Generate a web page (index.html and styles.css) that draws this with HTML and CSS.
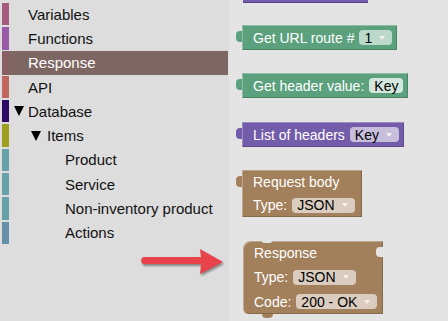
FILE: index.html
```html
<!DOCTYPE html>
<html lang="en">
  <head>
    <meta charset="UTF-8" />
    <meta name="viewport" content="width=device-width, initial-scale=1.0" />
    <title>Blocks</title>
    <link rel="stylesheet" href="styles.css">
  </head>
  <body>
    <div class="app">
      <nav class="toolbox">
        <div class="cat"><span class="swatch sw-variables"></span><span class="name">Variables</span></div>
        <div class="cat"><span class="swatch sw-functions"></span><span class="name">Functions</span></div>
        <div class="cat selected"><span class="swatch sw-response"></span><span class="name">Response</span></div>
        <div class="cat"><span class="swatch sw-api"></span><span class="name">API</span></div>
        <div class="cat folder"><span class="swatch sw-database"></span><span class="caret"></span><span class="name">Database</span></div>
        <div class="cat folder lvl1"><span class="swatch sw-items"></span><span class="caret"></span><span class="name">Items</span></div>
        <div class="cat lvl2"><span class="swatch sw-item"></span><span class="name">Product</span></div>
        <div class="cat lvl2"><span class="swatch sw-item"></span><span class="name">Service</span></div>
        <div class="cat lvl2"><span class="swatch sw-item"></span><span class="name">Non-inventory product</span></div>
        <div class="cat lvl2"><span class="swatch sw-actions"></span><span class="name">Actions</span></div>
      </nav>

      <main class="workspace">
        <div class="block-edge"></div>

        <div class="block value green b-route">
          <div class="row">
            <span>Get URL route #</span>
            <span class="field"><span>1</span><span class="drop"></span></span>
          </div>
        </div>

        <div class="block value green b-header">
          <div class="row">
            <span>Get header value:</span>
            <span class="field text">Key</span>
          </div>
        </div>

        <div class="block value purple b-list">
          <div class="row">
            <span>List of headers</span>
            <span class="field"><span>Key</span><span class="drop"></span></span>
          </div>
        </div>

        <div class="block value brown b-body">
          <div class="row"><span>Request body</span></div>
          <div class="row">
            <span>Type:</span>
            <span class="field"><span>JSON</span><span class="drop"></span></span>
          </div>
        </div>

        <div class="block statement brown b-response">
          <span class="socket"></span>
          <div class="row"><span>Response</span></div>
          <div class="row">
            <span>Type:</span>
            <span class="field"><span>JSON</span><span class="drop"></span></span>
          </div>
          <div class="row">
            <span>Code:</span>
            <span class="field"><span>200 - OK</span><span class="drop"></span></span>
          </div>
        </div>
      </main>

      <!-- annotation arrow pointing at the Response block -->
      <svg class="pointer" width="448" height="321" viewBox="0 0 448 321">
        <path d="M143 257 L201 257 L200 249 L223 262 L200 274 L201 264 L143 264 Q139 260.5 143 257 Z" fill="#e8434b" />
      </svg>
    </div>
  </body>
</html>
```

FILE: styles.css
```css
html,
body {
  margin: 0;
  height: 100%;
  overflow: hidden;
}

body {
  font-family: "Liberation Sans", Arial, sans-serif;
  background-color: #e4e4e4;
}

.app {
  position: relative;
  display: flex;
  height: 100%;
}

/* toolbox */

.toolbox {
  width: 226px;
  flex-shrink: 0;
  padding: 2px 1px 0 2px;
  background-color: #dddddd;
  font-size: 15px;
  color: #111;
}

.cat {
  display: flex;
  align-items: center;
  height: 24.3px;
}

.cat.selected {
  background-color: #7e6763;
  color: #fff;
}

.swatch {
  align-self: stretch;
  width: 7px;
  margin: 1px 0;
}

.name {
  margin-left: 19px;
  white-space: nowrap;
}

.caret {
  width: 0;
  height: 0;
  margin-left: 5px;
  margin-right: 4px;
  border-left: 5px solid transparent;
  border-right: 5px solid transparent;
  border-top: 10px solid #000;
}

.folder .name {
  margin-left: 0;
}

.lvl1 .caret {
  margin-left: 22px;
  margin-right: 6px;
}

.lvl2 .name {
  margin-left: 56px;
}

.sw-variables { background-color: #a55b80; }
.sw-functions { background-color: #995ba8; }
.sw-response { background-color: #8a6066; }
.sw-api { background-color: #c0675e; }
.sw-database { background-color: #2c0a66; }
.sw-items { background-color: #a0a020; }
.sw-item { background-color: #66a0a8; }
.sw-actions { background-color: #6690aa; }

/* workspace */

.workspace {
  flex: 1;
  display: flex;
  flex-direction: column;
  align-items: flex-start;
  padding-left: 13px;
  font-size: 14px;
  color: #fff;
}

.block-edge {
  width: 125px;
  height: 2px;
  margin-left: 1px;
  background-color: #735ca9;
  border-bottom: 1px solid #54428a;
}

.block {
  position: relative;
  display: flex;
  flex-direction: column;
  padding: 0 5px 0 11px;
  box-shadow: inset 1px 1px 0 rgba(255, 255, 255, 0.3),
    inset -1px -1px 0 rgba(0, 0, 0, 0.18);
}

.green { background-color: #5ba17d; }
.purple { background-color: #735ca9; }
.brown { background-color: #a3805c; }

.value::before {
  content: "";
  position: absolute;
  left: -6px;
  top: 6px;
  width: 6px;
  height: 11px;
  border-radius: 4px 0 0 4px;
  background-color: inherit;
}

.row {
  display: flex;
  align-items: center;
  gap: 5px;
  height: 25px;
  white-space: nowrap;
}

.field {
  display: inline-flex;
  align-items: center;
  gap: 7px;
  height: 15px;
  padding: 0 7px 0 5px;
  border-radius: 4px;
  background-color: rgba(255, 255, 255, 0.6);
  color: #000;
}

.field.text {
  padding-right: 5px;
  background-color: rgba(255, 255, 255, 0.75);
}

.drop {
  width: 0;
  height: 0;
  border-left: 3px solid transparent;
  border-right: 3px solid transparent;
  border-top: 4px solid #f4f1ee;
}

.b-route { margin-top: 22px; }
.b-header { margin-top: 23px; }
.b-list { margin-top: 24px; }

.b-body {
  margin-top: 23px;
  padding-right: 7px;
}

.b-body .row {
  height: 23.5px;
}

.b-response {
  margin-top: 24px;
  margin-left: 1px;
  padding-right: 6px;
  border-radius: 8px 0 0 6px;
}

.b-response .row {
  height: 24.3px;
}

/* previous-connection notch and next-connection tab */
.statement::before {
  content: "";
  position: absolute;
  left: 19px;
  top: 0;
  width: 10px;
  height: 2px;
  border-radius: 0 0 3px 3px;
  background-color: #e4e4e4;
}

.statement::after {
  content: "";
  position: absolute;
  left: 19px;
  bottom: -4px;
  width: 11px;
  height: 4px;
  border-radius: 0 0 5px 5px;
  background-color: #a3805c;
}

.socket {
  position: absolute;
  right: 0;
  top: 6px;
  width: 7px;
  height: 10px;
  border-radius: 4px 0 0 4px;
  background-color: #e4e4e4;
}

.pointer {
  position: absolute;
  left: 0;
  top: 0;
  pointer-events: none;
  filter: drop-shadow(1px 2px 1px rgba(0, 0, 0, 0.4));
}
```
